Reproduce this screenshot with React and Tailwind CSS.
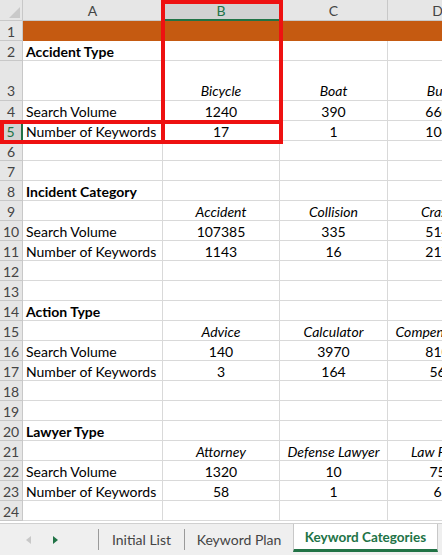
import React from "react";

const font = { fontFamily: "Lato, 'Noto Sans', sans-serif" };

const sections = [
  { title: "Accident Type", labels: ["Bicycle", "Boat", "Bus"], sv: ["1240", "390", "660"], nk: ["17", "1", "104"], tall: true },
  { title: "Incident Category", labels: ["Accident", "Collision", "Crash"], sv: ["107385", "335", "514"], nk: ["1143", "16", "217"] },
  { title: "Action Type", labels: ["Advice", "Calculator", "Compensation"], sv: ["140", "3970", "810"], nk: ["3", "164", "56"] },
  { title: "Lawyer Type", labels: ["Attorney", "Defense Lawyer", "Law Firm"], sv: ["1320", "10", "75"], nk: ["58", "1", "6"] },
];

function buildRows() {
  const rows = [];
  rows.push({ n: 1, orange: true, cells: ["", "", "", ""] });
  let n = 2;
  sections.forEach((s) => {
    rows.push({ n: n++, cells: [{ t: s.title, bold: true }, "", "", ""] });
    rows.push({ n: n++, tall: !!s.tall, cells: ["", ...s.labels.map((t) => ({ t, italic: true }))] });
    rows.push({ n: n++, cells: [{ t: "Search Volume" }, ...s.sv] });
    rows.push({ n: n++, cells: [{ t: "Number of Keywords" }, ...s.nk] });
    rows.push({ n: n++, cells: ["", "", "", ""] });
    rows.push({ n: n++, cells: ["", "", "", ""] });
  });
  return rows.filter((r) => r.n <= 24);
}

function Cell({ c, col, orange, tall }) {
  const obj = typeof c === "string" ? { t: c } : c;
  const align = col === 0 ? "justify-start pl-[3px]" : "justify-center";
  return (
    <div
      className={`flex ${tall ? "h-[40px] items-end pb-[0px]" : "h-[20px] items-center pt-[2px]"} ${align} leading-[18px] whitespace-nowrap border-r border-b ${
        orange ? "bg-[#c55a11] border-[#c55a11]" : "border-[#d9d9d9]"
      } text-[14px] text-black ${obj.bold ? "font-bold" : ""} ${obj.italic ? "italic" : ""}`}
    >
      {obj.t}
    </div>
  );
}

export default function App() {
  const rows = buildRows();
  return (
    <div className="relative w-[442px] h-[555px] overflow-hidden bg-white" style={font}>
      <div className="w-[442px] h-[523px] overflow-hidden">
        <div className="grid grid-cols-[23px_140px_117px_108px_100px] w-[488px]">
          <div className="h-[21px] bg-[#e6e6e6] border-r border-b border-[#c8c8c8] relative">
            <div className="absolute right-[2px] bottom-[2px] w-0 h-0 border-l-[11px] border-l-transparent border-b-[11px] border-b-[#c9c9c9]" />
          </div>
          {["A", "B", "C", "D"].map((l) => (
            <div
              key={l}
              className={`h-[21px] flex items-center justify-center pt-[2px] leading-[18px] text-[14px] border-r border-[#c8c8c8] ${
                l === "B" ? "bg-[#d2d2d2] border-b-2 border-b-[#217346] text-[#217346]" : "bg-[#e6e6e6] border-b border-b-[#c8c8c8] text-[#444]"
              }`}
            >
              {l}
            </div>
          ))}
          {rows.map((r) => (
            <React.Fragment key={r.n}>
              <div
                className={`${r.tall ? "h-[40px] items-end pb-[0px]" : "h-[20px] items-center pt-[2px]"} flex justify-center leading-[18px] text-[14px] border-b border-[#c8c8c8] ${
                  r.n === 5 ? "bg-[#d2d2d2] border-r-2 border-r-[#217346] text-[#217346]" : "bg-[#e6e6e6] border-r border-r-[#c8c8c8] text-[#444]"
                }`}
              >
                {r.n}
              </div>
              {r.cells.map((c, i) => (
                <Cell key={i} c={c} col={i} orange={r.orange} tall={r.tall} />
              ))}
            </React.Fragment>
          ))}
        </div>
      </div>

      <div className="h-[32px] bg-[#efefef] border-t border-[#d0d0d0] flex items-stretch text-[14px] leading-[18px] text-[#444]">
        <div className="w-[98px] flex items-center pl-[24px] gap-[20px]">
          <svg width="8" height="10" viewBox="0 0 8 10"><path d="M7 1 L2 5 L7 9 Z" fill="#c8c8c8" /></svg>
          <svg width="8" height="10" viewBox="0 0 8 10"><path d="M1 1 L6 5 L1 9 Z" fill="#217346" /></svg>
        </div>
        <div className="flex items-center my-[5px] border-l border-[#9a9a9a] w-[86px] justify-center">Initial List</div>
        <div className="flex items-center my-[5px] border-l border-[#9a9a9a] w-[109px] justify-center">Keyword Plan</div>
        <div className="flex items-center justify-center w-[145px] bg-white border-x border-[#c8c8c8] border-b-[3px] border-b-[#217346] mb-[3px] font-bold text-[13.5px] text-[#217346]">
          Keyword Categories
        </div>
      </div>

      <div className="absolute left-[161px] top-0 w-[122px] h-[144px] border-4 border-[#ee1111] pointer-events-none" />
      <div className="absolute left-0 top-[120px] w-[283px] h-[24px] border-4 border-[#ee1111] pointer-events-none" />
    </div>
  );
}
